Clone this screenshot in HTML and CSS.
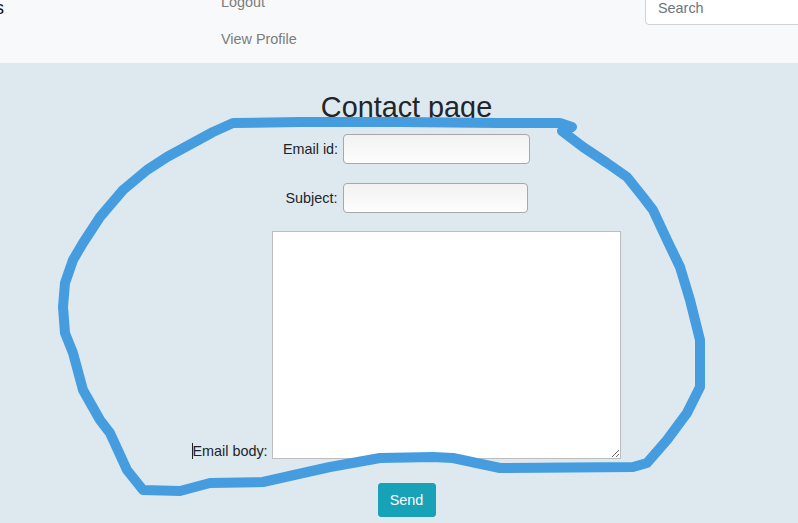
FILE: index.html
```html
<!DOCTYPE html>
<html lang="en">
<head>
<meta charset="utf-8">
<title>Contact page</title>
<link rel="stylesheet" href="styles.css">
</head>
<body>
<nav class="navbar">
  <span class="brand">s</span>
  <ul class="nav-links">
    <li class="nav-item">Logout</li>
    <li class="nav-item">View Profile</li>
  </ul>
  <input class="search" type="text" placeholder="Search">
</nav>
<main class="content">
  <h2 class="title">Contact page</h2>
  <form class="contact-form">
    <div class="row">
      <label class="label">Email id:</label>
      <input class="field field-email" type="text">
    </div>
    <div class="row">
      <label class="label">Subject:</label>
      <input class="field field-subject" type="text">
    </div>
    <div class="row row-body">
      <label class="label"><span class="caret"></span>Email body:</label>
      <textarea class="body-field"></textarea>
    </div>
    <div class="row row-send">
      <button class="send" type="button">Send</button>
    </div>
  </form>
</main>
<svg class="annotation" width="798" height="523" viewBox="0 0 798 523" xmlns="http://www.w3.org/2000/svg">
  <path d="M233 123 L300 122 L400 122 L500 123 L560 123 L572 127 L562 131 L583 147 L607 163 L627 177 L643 197 L653 210 L667 240 L680 267 L690 300 L700 340 L700 387 L687 413 L667 440 L647 463 L633 467 L500 468 L453 458 L433 457 L380 458 L330 467 L303 473 L263 482 L210 483 L180 491 L143 490 L127 470 L110 433 L100 420 L83 390 L73 353 L65 333 L63 307 L65 283 L73 260 L83 243 L100 217 L123 190 L147 170 L167 157 L213 132 Z" fill="none" stroke="#459ddf" stroke-width="10" stroke-linejoin="round" stroke-linecap="round"/>
</svg>
</body>
</html>
```
FILE: styles.css
```css
html, body {
  margin: 0;
  padding: 0;
}
body {
  background: #dee8ef;
  font-family: "Liberation Sans", Arial, sans-serif;
  font-size: 14.4px;
  color: #212529;
  height: 523px;
  overflow: hidden;
  position: relative;
}
.navbar {
  height: 63px;
  background: #f8f9fa;
  display: flex;
  align-items: flex-start;
  overflow: hidden;
}
.brand {
  flex: none;
  width: 226px;
  margin-left: -5px;
  margin-top: -2px;
  font-size: 18px;
  line-height: 21.6px;
  color: #111;
}
.nav-links {
  list-style: none;
  margin: -16.5px 0 0 0;
  padding: 0;
  display: flex;
  flex-direction: column;
}
.nav-item {
  padding: 8px 0;
  line-height: 21px;
  color: #7b7c7d;
}
.search {
  flex: none;
  box-sizing: border-box;
  margin-left: auto;
  margin-right: -27px;
  margin-top: -9px;
  width: 180px;
  height: 34px;
  padding: 0 12px;
  border: 1px solid #ced4da;
  border-radius: 4px;
  background: #fff;
  font-family: inherit;
  font-size: 14.4px;
  color: #495057;
}
.search::placeholder {
  color: #6c757d;
}
.content {
  padding-left: 15px;
}
.title {
  margin: 27px 0 0;
  font-size: 28.8px;
  font-weight: 400;
  line-height: 1.2;
  text-align: center;
  color: #212529;
}
.contact-form {
  margin-top: 9.4px;
  display: flex;
  flex-direction: column;
}
.row {
  display: flex;
  justify-content: center;
  align-items: center;
}
.row + .row {
  margin-top: 19px;
}
.row-body {
  align-items: flex-end;
  margin-top: 18px !important;
}
.row-send {
  margin-top: 24px !important;
}
.label {
  color: #212529;
  font-size: 14.4px;
  white-space: nowrap;
}
.caret {
  display: inline-block;
  width: 1px;
  height: 16px;
  background: #222;
  vertical-align: -3px;
  margin-right: -1px;
}
.field {
  box-sizing: border-box;
  height: 30px;
  margin-left: 5px;
  border: 1px solid #a8a8a8;
  border-radius: 4px;
  background: linear-gradient(to bottom, #f2f2f2, #fdfdfd);
  font-family: inherit;
  font-size: 14.4px;
}
.field-email {
  width: 187px;
}
.field-subject {
  width: 185px;
}
.body-field {
  box-sizing: border-box;
  width: 349px;
  height: 228px;
  margin: 0 0 0 4px;
  border: 1px solid #bdbdbd;
  background: #fff;
  display: block;
}
.send {
  box-sizing: border-box;
  width: 58px;
  height: 34px;
  padding: 0;
  border: 1px solid #17a2b8;
  border-radius: 3px;
  background: #17a2b8;
  color: #fff;
  font-family: inherit;
  font-size: 14.4px;
}
.annotation {
  position: absolute;
  top: 0;
  left: 0;
  pointer-events: none;
}
```
